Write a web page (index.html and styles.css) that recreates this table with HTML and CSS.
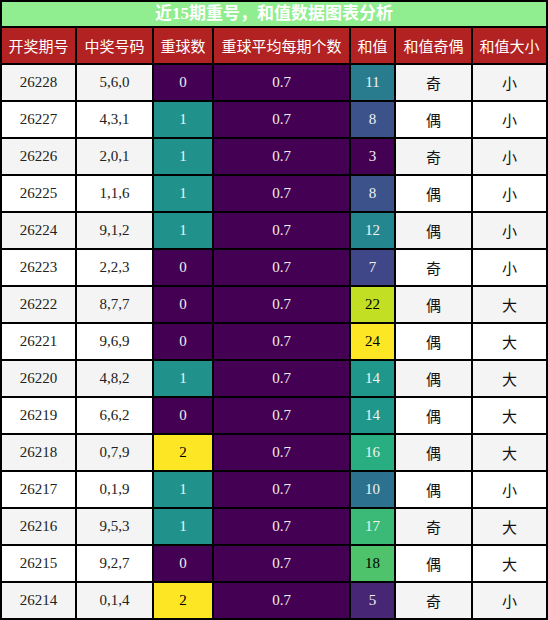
FILE: index.html
```html
<!DOCTYPE html>
<html lang="zh">
<head>
<meta charset="utf-8">
<title>近15期重号，和值数据图表分析</title>
<link rel="stylesheet" href="styles.css">
</head>
<body>
<table class="tbl">
  <colgroup>
    <col class="c1"><col class="c2"><col class="c3"><col class="c4"><col class="c5"><col class="c6"><col class="c7">
  </colgroup>
  <thead>
    <tr><th class="title" colspan="7">近15期重号，和值数据图表分析</th></tr>
    <tr class="head">
      <th>开奖期号</th><th>中奖号码</th><th>重球数</th><th>重球平均每期个数</th><th>和值</th><th>和值奇偶</th><th>和值大小</th>
    </tr>
  </thead>
  <tbody>
    <tr><td>26228</td><td>5,6,0</td><td class="v0">0</td><td class="v0">0.7</td><td class="s11">11</td><td class="cj">奇</td><td class="cj">小</td></tr>
    <tr><td>26227</td><td>4,3,1</td><td class="v1">1</td><td class="v0">0.7</td><td class="s8">8</td><td class="cj">偶</td><td class="cj">小</td></tr>
    <tr><td>26226</td><td>2,0,1</td><td class="v1">1</td><td class="v0">0.7</td><td class="s3">3</td><td class="cj">奇</td><td class="cj">小</td></tr>
    <tr><td>26225</td><td>1,1,6</td><td class="v1">1</td><td class="v0">0.7</td><td class="s8">8</td><td class="cj">偶</td><td class="cj">小</td></tr>
    <tr><td>26224</td><td>9,1,2</td><td class="v1">1</td><td class="v0">0.7</td><td class="s12">12</td><td class="cj">偶</td><td class="cj">小</td></tr>
    <tr><td>26223</td><td>2,2,3</td><td class="v0">0</td><td class="v0">0.7</td><td class="s7">7</td><td class="cj">奇</td><td class="cj">小</td></tr>
    <tr><td>26222</td><td>8,7,7</td><td class="v0">0</td><td class="v0">0.7</td><td class="s22">22</td><td class="cj">偶</td><td class="cj">大</td></tr>
    <tr><td>26221</td><td>9,6,9</td><td class="v0">0</td><td class="v0">0.7</td><td class="s24">24</td><td class="cj">偶</td><td class="cj">大</td></tr>
    <tr><td>26220</td><td>4,8,2</td><td class="v1">1</td><td class="v0">0.7</td><td class="s14">14</td><td class="cj">偶</td><td class="cj">大</td></tr>
    <tr><td>26219</td><td>6,6,2</td><td class="v0">0</td><td class="v0">0.7</td><td class="s14">14</td><td class="cj">偶</td><td class="cj">大</td></tr>
    <tr><td>26218</td><td>0,7,9</td><td class="v2">2</td><td class="v0">0.7</td><td class="s16">16</td><td class="cj">偶</td><td class="cj">大</td></tr>
    <tr><td>26217</td><td>0,1,9</td><td class="v1">1</td><td class="v0">0.7</td><td class="s10">10</td><td class="cj">偶</td><td class="cj">小</td></tr>
    <tr><td>26216</td><td>9,5,3</td><td class="v1">1</td><td class="v0">0.7</td><td class="s17">17</td><td class="cj">奇</td><td class="cj">大</td></tr>
    <tr><td>26215</td><td>9,2,7</td><td class="v0">0</td><td class="v0">0.7</td><td class="s18">18</td><td class="cj">偶</td><td class="cj">大</td></tr>
    <tr><td>26214</td><td>0,1,4</td><td class="v2">2</td><td class="v0">0.7</td><td class="s5">5</td><td class="cj">奇</td><td class="cj">小</td></tr>
  </tbody>
</table>
</body>
</html>
```
FILE: styles.css
```css
html, body {
  margin: 0;
  padding: 0;
  background: #ffffff;
}

.tbl {
  border-collapse: separate;
  border-spacing: 0;
  table-layout: fixed;
  width: 548px;
  border-left: 2px solid #000;
  border-top: 2px solid #000;
  font-family: "Liberation Serif", "Noto Sans CJK SC", serif;
  font-size: 15px;
  color: #222;
}

.c1 { width: 75px; }
.c2 { width: 77px; }
.c3 { width: 60px; }
.c4 { width: 137px; }
.c5 { width: 45px; }
.c6 { width: 77px; }
.c7 { width: 75px; }

.tbl th,
.tbl td {
  border-right: 2px solid #000;
  border-bottom: 2px solid #000;
  padding: 0;
  text-align: center;
  vertical-align: middle;
}

.title {
  height: 24px;
  background: #90ee90;
  color: #ffffff;
  font-family: "Liberation Serif", "Noto Sans CJK SC", serif;
  font-weight: bold;
  font-size: 17px;
  line-height: 24px;
}

.head th {
  height: 35px;
  background: #b22222;
  color: #ffffff;
  font-family: "Noto Sans CJK SC", sans-serif;
  font-weight: normal;
  font-size: 15px;
}

.tbl td {
  height: 35px;
  line-height: 35px;
}

.tbl tbody tr:nth-child(odd) td { background: #f4f4f4; }
.tbl tbody tr:nth-child(even) td { background: #ffffff; }

.tbl td.cj {
  font-family: "Noto Sans CJK SC", sans-serif;
  color: #111;
}

/* viridis gradient cells */
.tbl tbody tr td.v0 { background: #440154; color: #f1f1f1; }
.tbl tbody tr td.v1 { background: #21918c; color: #f1f1f1; }
.tbl tbody tr td.v2 { background: #fde725; color: #000000; }

.tbl tbody tr td.s3  { background: #440154; color: #f1f1f1; }
.tbl tbody tr td.s5  { background: #472675; color: #f1f1f1; }
.tbl tbody tr td.s7  { background: #3f4788; color: #f1f1f1; }
.tbl tbody tr td.s8  { background: #3b528b; color: #f1f1f1; }
.tbl tbody tr td.s10 { background: #2c728e; color: #f1f1f1; }
.tbl tbody tr td.s11 { background: #287c8e; color: #f1f1f1; }
.tbl tbody tr td.s12 { background: #24868e; color: #f1f1f1; }
.tbl tbody tr td.s14 { background: #1f988b; color: #f1f1f1; }
.tbl tbody tr td.s16 { background: #28ae80; color: #f1f1f1; }
.tbl tbody tr td.s17 { background: #3aba76; color: #f1f1f1; }
.tbl tbody tr td.s18 { background: #4ec36b; color: #000000; }
.tbl tbody tr td.s22 { background: #c2df23; color: #000000; }
.tbl tbody tr td.s24 { background: #fde725; color: #000000; }
```
